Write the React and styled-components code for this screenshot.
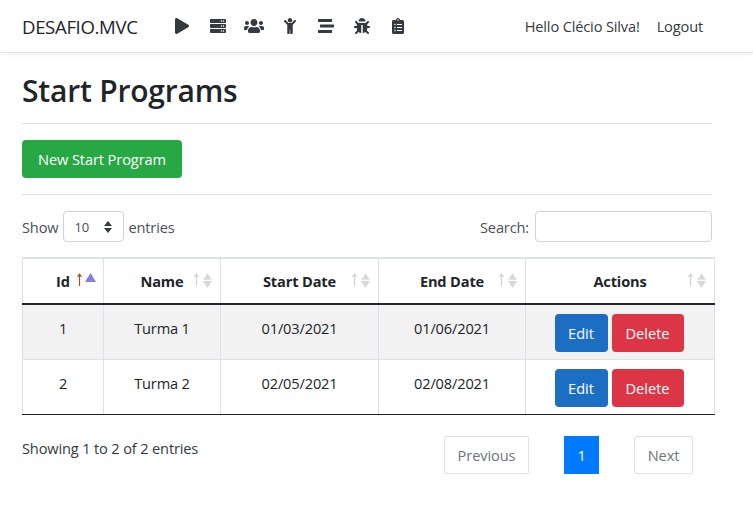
import React from 'react';
import styled, { createGlobalStyle } from 'styled-components';
import { FaPlay, FaServer, FaUsers, FaChild, FaStream, FaBug, FaClipboardList } from 'react-icons/fa';

const GlobalStyle = createGlobalStyle`
  html, body {
    margin: 0;
    padding: 0;
    background: #ffffff;
    color: #212529;
    font-family: "Open Sans", "Noto Sans", sans-serif;
    font-size: 15px;
  }
`;

const Navbar = styled.nav`
  display: flex;
  align-items: center;
  height: 53px;
  padding: 0 50px 0 22px;
  box-sizing: border-box;
  border-bottom: 1px solid #e4e4e4;
  box-shadow: 0 2px 4px rgb(0 0 0 / 0.05);
`;

const Brand = styled.div`
  font-size: 18.6px;
  letter-spacing: -0.35px;
  color: #212529;
  margin-right: 26px;
`;

const IconList = styled.div`
  display: flex;
  align-items: center;
  gap: 0;
  flex: 1;
  color: #343a40;
`;

const IconSlot = styled.span`
  display: flex;
  align-items: center;
  justify-content: center;
  width: 36px;
  height: 20px;
  font-size: ${(p) => p.$size || 16}px;
`;

const NavText = styled.span`
  font-size: 14.6px;
  letter-spacing: -0.15px;
  margin-left: ${(p) => p.$gap || 0}px;
  color: #343a40;
`;

const Main = styled.main`
  padding: 0 41px 0 22px;
`;

const Title = styled.h1`
  margin: 16px 0 0;
  font-size: 30px;
  line-height: 44px;
  font-weight: 600;
  letter-spacing: -0.2px;
  color: #212529;
`;

const Rule = styled.hr`
  border: 0;
  border-top: 1px solid #e3e3e3;
  margin: ${(p) => p.$top}px 0 ${(p) => p.$bottom}px;
`;

const NewButton = styled.button`
  display: block;
  width: 160px;
  height: 38px;
  padding: 0;
  border: 0;
  border-radius: 4px;
  background: #28a745;
  color: #fff;
  font: inherit;
  font-size: 14.6px;
  letter-spacing: -0.1px;
`;

const Controls = styled.div`
  display: flex;
  justify-content: space-between;
  align-items: center;
  height: 31px;
  margin-bottom: 15px;
`;

const ControlGroup = styled.label`
  display: flex;
  align-items: center;
  font-size: 14.6px;
  letter-spacing: -0.15px;
  color: #495057;
`;

const FakeSelect = styled.span`
  display: flex;
  align-items: center;
  justify-content: space-between;
  box-sizing: border-box;
  width: 61px;
  height: 31px;
  margin: 0 4px 0 5px;
  padding: 0 11px 0 10px;
  border: 1px solid #ced4da;
  border-radius: 4px;
  font-size: 13px;
  color: #495057;
`;

const SearchInput = styled.input`
  box-sizing: border-box;
  width: 177px;
  height: 31px;
  margin-left: 6px;
  border: 1px solid #ced4da;
  border-radius: 4px;
`;

const Table = styled.table`
  width: 692px;
  table-layout: fixed;
  border-collapse: collapse;
  border-top: 2px solid #dee2e6;
`;

const HeadCell = styled.th`
  position: relative;
  height: 44px;
  padding: 0;
  border: 1px solid #dee2e6;
  border-top: 0;
  border-bottom: 2px solid #212529;
  font-size: 14.6px;
  font-weight: 700;
  letter-spacing: -0.15px;
  color: #212529;
`;

const SortMark = styled.svg`
  position: absolute;
  top: 12px;
  right: 5px;
`;

const Row = styled.tr`
  background: ${(p) => (p.$striped ? '#f2f2f2' : '#ffffff')};
`;

const Cell = styled.td`
  height: 55px;
  padding: 13px 0 0;
  box-sizing: border-box;
  vertical-align: top;
  text-align: center;
  border: 1px solid #dee2e6;
  border-bottom: ${(p) => (p.$last ? '1px solid #212529' : '1px solid #dee2e6')};
  font-size: 14.6px;
  letter-spacing: -0.15px;
  color: #212529;
`;

const ActionCell = styled(Cell)`
  padding: 9px 0 0;
`;

const Actions = styled.div`
  display: flex;
  justify-content: center;
  gap: 4px;
  margin-left: -2px;
`;

const ActionButton = styled.button`
  height: 38px;
  width: ${(p) => p.$width}px;
  padding: 0;
  border: 0;
  border-radius: 4px;
  background: ${(p) => p.$color};
  color: #fff;
  font: inherit;
  font-size: 14.6px;
`;

const Footer = styled.div`
  display: flex;
  justify-content: space-between;
  align-items: flex-start;
  margin-top: 21px;
  padding-right: 19px;
`;

const Info = styled.div`
  margin-top: 2px;
  font-size: 14.6px;
  letter-spacing: -0.15px;
  color: #343a40;
`;

const Pager = styled.div`
  display: flex;
  align-items: center;
  gap: 35px;
`;

const PageButton = styled.div`
  display: flex;
  align-items: center;
  justify-content: center;
  box-sizing: border-box;
  height: 38px;
  width: ${(p) => p.$width}px;
  border: ${(p) => (p.$active ? '0' : '1px solid #dee2e6')};
  border-radius: ${(p) => (p.$active ? '0' : '2px')};
  background: ${(p) => (p.$active ? '#007bff' : '#fff')};
  color: ${(p) => (p.$active ? '#fff' : '#6c757d')};
  font-size: 14.6px;
  letter-spacing: -0.1px;
`;

const SortIcon = ({ active }) => (
  <SortMark width="24" height="18" viewBox="0 0 24 18">
    <path d="M5.5 3.5V15M3.5 6l2-3 2 3" fill="none" stroke={active ? '#a5531f' : '#d0d0d0'} strokeWidth="1.2" />
    <path d="M12.5 8h8" stroke={active ? '#e2e2f5' : '#c8c8c8'} strokeWidth="1" />
    {active ? (
      <path d="M11 11l5.5-9 5.5 9z" fill="#8080de" />
    ) : (
      <path d="M11.5 9l5 -7v0l0 0M12 10l4.5 7 4.5-7zM13 8l3.5-6 3.5 6z" fill="#d8d8d8" />
    )}
  </SortMark>
);

const columns = [
  { name: 'Id', width: 81, active: true },
  { name: 'Name', width: 117 },
  { name: 'Start Date', width: 158 },
  { name: 'End Date', width: 147 },
  { name: 'Actions', width: 189 },
];

const rows = [
  { id: 1, name: 'Turma 1', start: '01/03/2021', end: '01/06/2021' },
  { id: 2, name: 'Turma 2', start: '02/05/2021', end: '02/08/2021' },
];

const App = () => {
  return (
    <>
      <GlobalStyle />
      <Navbar>
        <Brand>DESAFIO.MVC</Brand>
        <IconList>
          <IconSlot><FaPlay /></IconSlot>
          <IconSlot><FaServer /></IconSlot>
          <IconSlot $size={20}><FaUsers /></IconSlot>
          <IconSlot><FaChild /></IconSlot>
          <IconSlot><FaStream /></IconSlot>
          <IconSlot><FaBug /></IconSlot>
          <IconSlot><FaClipboardList /></IconSlot>
        </IconList>
        <NavText>Hello Clécio Silva!</NavText>
        <NavText $gap={17}>Logout</NavText>
      </Navbar>
      <Main>
        <Title>Start Programs</Title>
        <Rule $top={10} $bottom={16} />
        <NewButton>New Start Program</NewButton>
        <Rule $top={16} $bottom={16} />
        <Controls>
          <ControlGroup>
            Show
            <FakeSelect>
              10
              <svg width="8" height="12" viewBox="0 0 8 12">
                <path d="M4 0l4 5H0zM4 12L0 7h8z" fill="#343a40" />
              </svg>
            </FakeSelect>
            entries
          </ControlGroup>
          <ControlGroup>
            Search:
            <SearchInput />
          </ControlGroup>
        </Controls>
        <Table>
          <colgroup>
            {columns.map((col) => (
              <col key={col.name} style={{ width: col.width }} />
            ))}
          </colgroup>
          <thead>
            <tr>
              {columns.map((col) => (
                <HeadCell key={col.name}>
                  {col.name}
                  <SortIcon active={col.active} />
                </HeadCell>
              ))}
            </tr>
          </thead>
          <tbody>
            {rows.map((row, idx) => {
              const last = idx === rows.length - 1;
              return (
                <Row key={row.id} $striped={idx === 0}>
                  <Cell $last={last}>{row.id}</Cell>
                  <Cell $last={last}>{row.name}</Cell>
                  <Cell $last={last}>{row.start}</Cell>
                  <Cell $last={last}>{row.end}</Cell>
                  <ActionCell $last={last}>
                    <Actions>
                      <ActionButton $width={53} $color="#1b6ec2">Edit</ActionButton>
                      <ActionButton $width={72} $color="#dc3545">Delete</ActionButton>
                    </Actions>
                  </ActionCell>
                </Row>
              );
            })}
          </tbody>
        </Table>
        <Footer>
          <Info>Showing 1 to 2 of 2 entries</Info>
          <Pager>
            <PageButton $width={85}>Previous</PageButton>
            <PageButton $width={35} $active>1</PageButton>
            <PageButton $width={59}>Next</PageButton>
          </Pager>
        </Footer>
      </Main>
    </>
  );
};

export default App;
